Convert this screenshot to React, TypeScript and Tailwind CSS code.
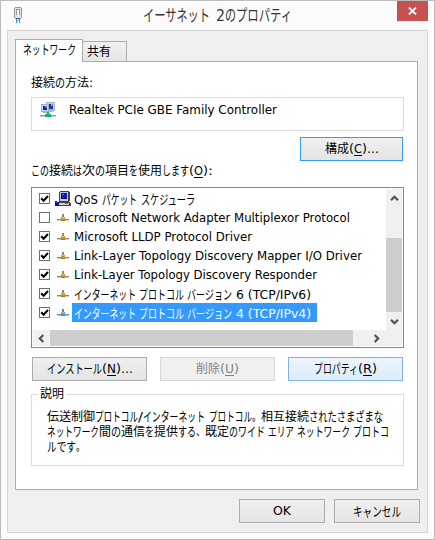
import { useLayoutEffect, useRef, useState } from "react";
import type { ReactNode } from "react";

type Seg = [text: string, width: number, underline?: boolean];

// Kana are set slightly taller and narrower than kanji.
const kanaOnly = /^[\u3040-\u30ff]+$/;

// One run of glyphs, condensed or widened to a fixed advance width.
function Run({ text, width, underline }: { text: string; width: number; underline?: boolean }) {
  const ref = useRef<HTMLSpanElement>(null);
  const [scale, setScale] = useState(1);
  useLayoutEffect(() => {
    const el = ref.current;
    if (!el) return;
    const shown = el.getBoundingClientRect().width;
    if (shown > 0) setScale((s) => (width * s) / shown);
  }, [text, width]);
  return (
    <span className="flex shrink-0 items-baseline" style={{ width }}>
      <span
        ref={ref}
        className={`inline-block origin-left whitespace-pre ${kanaOnly.test(text) ? "text-[1.08em]" : ""} ${
          underline ? "underline decoration-1 underline-offset-2" : ""
        }`}
        style={{ transform: `scaleX(${scale})` }}
      >
        {text}
      </span>
    </span>
  );
}

function Line({ segs, className = "" }: { segs: Seg[]; className?: string }) {
  return (
    <span className={`flex items-baseline ${className}`}>
      {segs.map(([t, w, u], i) =>
        t ? <Run key={i} text={t} width={w} underline={u} /> : <span key={i} className="shrink-0" style={{ width: w }} />,
      )}
    </span>
  );
}

function Button({ segs, className }: { segs: Seg[]; className: string }) {
  return (
    <button className={`flex h-6 shrink-0 items-center justify-center border leading-[15px] ${className}`}>
      <Line segs={segs} />
    </button>
  );
}

const plain = "border-[#acacac] bg-linear-to-b from-[#f0f0f0] to-[#e5e5e5]";

function Chevron({ turn = "" }: { turn?: string }) {
  return (
    <svg viewBox="0 0 9 9" className={`h-[9px] w-[9px] ${turn}`}>
      <path d="M1 6.3 4.5 2.8 8 6.3" fill="none" stroke="#505050" strokeWidth="2.2" />
    </svg>
  );
}

function PlugIcon() {
  return (
    <svg viewBox="0 0 10 18" className="h-[18px] w-[10px]" shapeRendering="crispEdges">
      <path d="M2 1h6v1h1v10H8v1H2v-1H1V2h1z" fill="#8b97a8" />
      <path d="M2 2h6v10H2z" fill="#dfe5ec" />
      <path d="M3 3h4v6H3z" fill="#8c97a5" />
      <path d="M4 4h2v5H4z" fill="#fff" />
      <path d="M3 12h4v1H3z" fill="#53616b" />
      <path d="M3 13h1v4H3zM6 13h1v4H6z" fill="#169bd3" />
      <path d="M4 13h2v2H4z" fill="#8bdcf5" />
    </svg>
  );
}

function AdapterIcon() {
  return (
    <svg viewBox="0 0 16 16" className="h-4 w-4" shapeRendering="crispEdges">
      <path d="M6 0h8l1 1v8h-2v1H7V8H6z" fill="#a9b7c4" />
      <path d="M7 1h7v6H7z" fill="#c6d2de" />
      <path d="M8 2h5v5H8z" fill="#1b35b4" />
      <path d="M11 2h2v2h-2z" fill="#7e9dee" />
      <path d="M1 2h8v8H8v1H3v-1H1z" fill="#a3b1bd" />
      <path d="M2 3h6v6H2z" fill="#cbd6e2" />
      <path d="M3 4h4v4H3z" fill="#1423a8" />
      <path d="M5 4h2v2H5z" fill="#4d76e4" />
      <path d="M7 10h2v2H7z" fill="#29a56b" />
      <path d="M5 12h6v3H5z" fill="#12b36a" />
      <path d="M0 13h5v1H0zM11 13h5v1h-5z" fill="#98a29c" />
      <path d="M0 14h5v1H0zM11 14h5v1h-5z" fill="#c3cac6" />
    </svg>
  );
}

function ComputerIcon() {
  return (
    <svg viewBox="0 0 16 16" className="h-4 w-4" shapeRendering="crispEdges">
      <path d="M5 0h9v1h1v9h-1v1H4V1h1z" fill="#404048" />
      <path d="M5 1h8v9H5z" fill="#c9c9d2" />
      <path d="M6 2h6v6H6z" fill="#101060" />
      <path d="M7 3h5v4H7z" fill="#0a18f0" />
      <path d="M7 3h2v1H7z" fill="#5f7fff" />
      <path d="M3 11h12v1h1v3H3z" fill="#404048" />
      <path d="M4 12h10v2H4z" fill="#d2d2da" />
      <path d="M10 12h3v1h-3z" fill="#666" />
      <path d="M0 10h2v1h2v4H0z" fill="#0a14a0" />
      <path d="M1 11h1v1H1z" fill="#4a5ae0" />
    </svg>
  );
}

function ProtocolIcon({ selected = false }: { selected?: boolean }) {
  return (
    <svg viewBox="0 0 12 8" className="h-2 w-3" shapeRendering="crispEdges">
      <path d="M5 0h2v3H5z" fill={selected ? "#5d86ac" : "#8a8a82"} />
      <path d="M4 3h4v3H4z" fill={selected ? "#7898a0" : "#d8941c"} />
      <path d="M5 3h2v1H5z" fill={selected ? "#a6bfca" : "#f5c544"} />
      <path d="M0 5h4v1H0zM8 5h4v1H8z" fill={selected ? "#5c90c4" : "#85857d"} />
      <path d="M0 6h12v1H0z" fill={selected ? "#99c2e9" : "#cfcfca"} />
      <path d="M4 6h4v1H4z" fill={selected ? "#5280a3" : "#a87418"} />
    </svg>
  );
}

function Item({ segs, icon, checked = true, selected = false }: { segs: Seg[]; icon?: ReactNode; checked?: boolean; selected?: boolean }) {
  return (
    <li className="flex h-[19px] shrink-0 items-center pl-[6px]">
      <span className="flex h-[11px] w-[11px] items-center justify-center border border-[#707070] bg-white">
        {checked && (
          <svg viewBox="0 0 9 9" className="h-[9px] w-[9px] shrink-0">
            <path d="M1.2 4.2 3.6 6.7 8 2" fill="none" stroke="#000" strokeWidth="2" />
          </svg>
        )}
      </span>
      <span className="ml-1 flex w-[18px] items-center justify-center">{icon ?? <ProtocolIcon selected={selected} />}</span>
      <span
        className={`flex h-[19px] items-center border ${
          selected ? "w-[245px] border-dotted border-[#cc7730] bg-[#3399ff] text-white" : "border-transparent"
        } pl-px pt-[2px] leading-[15px]`}
      >
        <Line segs={segs} />
      </span>
    </li>
  );
}

export default function App() {
  return (
    <main className="flex h-[540px] w-[435px] flex-col border border-[#bcbcbc] bg-[#fbfbfb] px-1.5 pb-1.5 font-['DejaVu_Sans','Noto_Sans_CJK_JP',sans-serif] text-[12px] text-black">
      <header className="flex h-[29px] shrink-0 items-start">
        <div className="ml-[6px] mt-[5px]">
          <PlugIcon />
        </div>
        <Line
          className="ml-[120px] mt-[5px] text-[15px] leading-[20px] text-[#333]"
          segs={[["イーサネット", 67], ["", 6], ["2", 9], ["の", 11], ["プロパティ", 56]]}
        />
        <button className="ml-auto flex h-5 w-[31px] items-center justify-center bg-[#c75050]">
          <svg viewBox="0 0 9 8" className="h-2 w-[9px]">
            <path d="M1 .5 8 7.5M8 .5 1 7.5" stroke="#fff" strokeWidth="1.8" />
          </svg>
        </button>
      </header>

      <section className="flex h-[503px] w-[421px] flex-col border border-[#d4d4d4] bg-[#efefef] px-[7px] pt-2">
        <nav className="relative z-10 flex h-[22px] shrink-0 items-end">
          <div className="-mb-px flex h-[23px] w-[68px] border border-b-0 border-[#acacac] bg-white pl-[7px] pt-[2px] leading-4">
            <Line segs={[["ネットワーク", 53]]} />
          </div>
          <div className="-mb-px flex h-[21px] w-11 border border-l-0 border-[#acacac] bg-linear-to-b from-[#f0f0f0] to-[#e5e5e5] pl-1 pt-[2px] leading-4">
            <Line segs={[["共有", 24]]} />
          </div>
        </nav>

        <div className="flex h-[429px] w-[403px] shrink-0 flex-col border border-[#acacac] bg-white pl-[15px]">
          <Line
            className="mt-[13px] h-4 leading-4"
            segs={[["接続", 24], ["の", 10], ["方法", 24], [":", 4]]}
          />
          <div className="mt-[6px] flex h-[34px] w-[373px] shrink-0 border border-[#dcdcdc] pl-2 pt-1">
            <AdapterIcon />
            <Line className="ml-[13px] mt-px h-4 leading-[15px]" segs={[["Realtek PCIe GBE Family Controller", 208]]} />
          </div>
          <Button
            className="ml-[269px] mt-[6px] w-[103px] border-[#3399ff] bg-linear-to-b from-[#f0f0f0] to-[#e5e5e5]"
            segs={[["構成", 24], ["(", 5], ["C", 8, true], [")", 5], ["...", 12]]}
          />
          <Line
            className="mt-[2px] h-4 leading-4"
            segs={[["この", 18], ["接続", 24], ["は", 9], ["次", 13], ["の", 10], ["項目", 24], ["を", 9], ["使用", 24], ["します", 27], ["(", 5], ["O", 9, true], [")", 5], [":", 5]]}
          />
          <div className="mt-2 flex h-[161px] w-[373px] shrink-0 flex-col border border-[#828790] p-px">
            <div className="flex h-[141px] shrink-0">
              <ul className="flex w-[353px] flex-col">
                <Item icon={<ComputerIcon />} segs={[["QoS", 24], ["", 4], ["パケット", 35], ["", 4], ["スケジューラ", 54]]} />
                <Item checked={false} segs={[["Microsoft Network Adapter Multiplexor Protocol", 276]]} />
                <Item segs={[["Microsoft LLDP Protocol Driver", 178]]} />
                <Item segs={[["Link-Layer Topology Discovery Mapper I/O Driver", 288]]} />
                <Item segs={[["Link-Layer Topology Discovery Responder", 243]]} />
                <Item segs={[["インターネット", 62], ["", 3], ["プロトコル", 45], ["", 3], ["バージョン", 45], ["", 4], ["6 (TCP/IPv6)", 75]]} />
                <Item selected segs={[["インターネット", 62], ["", 3], ["プロトコル", 45], ["", 3], ["バージョン", 45], ["", 4], ["4 (TCP/IPv4)", 75]]} />
              </ul>
              <div className="flex w-4 flex-col items-center bg-[#f0f0f0]">
                <div className="flex h-[49px] pt-[5px]">
                  <Chevron />
                </div>
                <div className="h-[74px] w-4 bg-[#cdcdcd]" />
                <div className="flex h-[18px] items-center">
                  <Chevron turn="rotate-180" />
                </div>
              </div>
            </div>
            <div className="flex h-4 w-[369px] items-center bg-[#f0f0f0]">
              <div className="flex w-[17px] justify-center">
                <Chevron turn="-rotate-90" />
              </div>
              <div className="h-4 w-[303px] bg-[#cdcdcd]" />
              <div className="ml-[19px]">
                <Chevron turn="rotate-90" />
              </div>
            </div>
          </div>

          <div className="ml-px mt-[9px] flex gap-[13px]">
            <Button className={`w-[115px] ${plain}`} segs={[["インストール", 55], ["(", 5], ["N", 9, true], [")", 5], ["...", 12]]} />
            <Button className="w-[115px] border-[#d9d9d9] bg-[#efefef] text-[#838383]" segs={[["削除", 24], ["(", 5], ["U", 9, true], [")", 5]]} />
            <Button
              className="w-[115px] border-[#7eb4ea] bg-linear-to-b from-[#ecf4fc] to-[#dcecfc]"
              segs={[["プロパティ", 44], ["(", 5], ["R", 9, true], [")", 5]]}
            />
          </div>

          <fieldset className="mt-[5px] h-[80px] w-[373px] shrink-0 border border-[#dcdcdc] pl-[15px]">
            <legend className="-ml-[9px] h-4 w-7 pl-[2px] leading-4">
              <Line segs={[["説明", 24]]} />
            </legend>
            <div className="mt-[7px] flex flex-col leading-[15px]">
              <Line
                className="h-[15px]"
                segs={[["伝送制御", 48], ["プロトコル", 43], ["/", 5], ["インターネット", 62], ["", 4], ["プロトコル", 43], ["。", 9], ["相互接続", 48], ["されたさまざまな", 74]]}
              />
              <Line
                className="h-[15px]"
                segs={[["ネットワーク", 52], ["間", 12], ["の", 10], ["通信", 24], ["を", 9], ["提供", 24], ["する", 18], ["、", 9], ["既定", 24], ["のワイド", 36], ["", 3], ["エリア", 26], ["", 3], ["ネットワーク", 53], ["", 3], ["プロトコ", 36]]}
              />
              <Line className="h-[15px]" segs={[["ルです", 29], ["。", 9]]} />
            </div>
          </fieldset>
        </div>

        <footer className="ml-[224px] mt-[9px] flex gap-[9px]">
          <Button className={`w-[86px] ${plain}`} segs={[["OK", 18]]} />
          <Button className={`w-[86px] ${plain}`} segs={[["キャンセル", 48]]} />
        </footer>
      </section>
    </main>
  );
}
